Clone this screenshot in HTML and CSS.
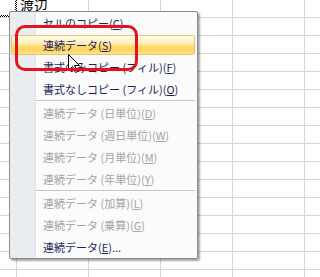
FILE: index.html
```html
<!DOCTYPE html>
<html lang="ja">
<head>
<meta charset="utf-8">
<link rel="stylesheet" href="styles.css">
</head>
<body>
<div class="screen">
  <div class="sheet">
    <div class="cell"></div><div class="cell name"><span>渡辺</span></div><div class="cell"></div><div class="cell"></div><div class="cell"></div><div class="cell"></div>
    <div class="cell"></div><div class="cell"></div><div class="cell"></div><div class="cell"></div><div class="cell"></div><div class="cell"></div>
    <div class="cell"></div><div class="cell"></div><div class="cell"></div><div class="cell"></div><div class="cell"></div><div class="cell"></div>
    <div class="cell"></div><div class="cell"></div><div class="cell"></div><div class="cell"></div><div class="cell"></div><div class="cell"></div>
    <div class="cell"></div><div class="cell"></div><div class="cell"></div><div class="cell"></div><div class="cell"></div><div class="cell"></div>
    <div class="cell"></div><div class="cell"></div><div class="cell"></div><div class="cell"></div><div class="cell"></div><div class="cell"></div>
    <div class="cell"></div><div class="cell"></div><div class="cell"></div><div class="cell"></div><div class="cell"></div><div class="cell"></div>
    <div class="cell"></div><div class="cell"></div><div class="cell"></div><div class="cell"></div><div class="cell"></div><div class="cell"></div>
    <div class="cell"></div><div class="cell"></div><div class="cell"></div><div class="cell"></div><div class="cell"></div><div class="cell"></div>
    <div class="cell"></div><div class="cell"></div><div class="cell"></div><div class="cell"></div><div class="cell"></div><div class="cell"></div>
    <div class="cell"></div><div class="cell"></div><div class="cell"></div><div class="cell"></div><div class="cell"></div><div class="cell"></div>
    <div class="cell"></div><div class="cell"></div><div class="cell"></div><div class="cell"></div><div class="cell"></div><div class="cell"></div>
    <div class="cell"></div><div class="cell"></div><div class="cell"></div><div class="cell"></div><div class="cell"></div><div class="cell"></div>
    <div class="cell"></div><div class="cell"></div><div class="cell"></div><div class="cell"></div><div class="cell"></div><div class="cell"></div>
    <div class="cell"></div><div class="cell"></div><div class="cell"></div><div class="cell"></div><div class="cell"></div><div class="cell"></div>
    <div class="cell"></div><div class="cell"></div><div class="cell"></div><div class="cell"></div><div class="cell"></div><div class="cell"></div>
  </div>
  <div class="copy-range"></div>

  <div class="menu">
    <div class="item">セルのコピー(<u>C</u>)</div>
    <div class="item hot">連続データ(<u>S</u>)</div>
    <div class="item">書式のみコピー (フィル)(<u>F</u>)</div>
    <div class="item">書式なしコピー (フィル)(<u>O</u>)</div>
    <div class="sep"></div>
    <div class="item off">連続データ (日単位)(<u>D</u>)</div>
    <div class="item off">連続データ (週日単位)(<u>W</u>)</div>
    <div class="item off">連続データ (月単位)(<u>M</u>)</div>
    <div class="item off">連続データ (年単位)(<u>Y</u>)</div>
    <div class="sep"></div>
    <div class="item off">連続データ (加算)(<u>L</u>)</div>
    <div class="item off">連続データ (乗算)(<u>G</u>)</div>
    <div class="item">連続データ(<u>E</u>)...</div>
  </div>

  <svg class="cursor" width="13" height="20" viewBox="0 0 13 20">
    <path d="M0.5 0.5 V16.5 L4.5 12.5 L7.5 18.5 L9.5 17.5 L6.5 11.5 H11.5 Z" fill="#fff" stroke="#000" stroke-width="1"/>
  </svg>

  <div class="mark"></div>
</div>
</body>
</html>
```
FILE: styles.css
```css
html, body {
  margin: 0;
  padding: 0;
  background: #fff;
}
.screen {
  position: relative;
  width: 100%;
  min-width: 214px;
  height: 100vh;
  min-height: 277px;
  overflow: hidden;
  font-family: "Noto Sans CJK JP", "Noto Sans", sans-serif;
}
.sheet {
  display: grid;
  grid-template-columns: 17px repeat(5, 72px);
  grid-auto-rows: 18px;
}
.cell {
  box-sizing: border-box;
  border-right: 1px solid #d6d6d6;
  border-bottom: 1px solid #d6d6d6;
  overflow: hidden;
}
.name {
  padding-left: 3px;
}
.name span {
  display: block;
  font-size: 14px;
  line-height: 14px;
  margin-top: -2px;
  color: #000;
}
.copy-range {
  position: absolute;
  left: 0;
  top: 0;
  width: 17px;
  height: 17px;
}
.copy-range::before,
.copy-range::after {
  content: "";
  position: absolute;
  background: repeating-conic-gradient(#000 0 25%, #fff 0 50%);
  background-size: 2px 2px;
}
.copy-range::before {
  right: 0;
  top: 0;
  width: 2px;
  height: 17px;
}
.copy-range::after {
  left: 0;
  bottom: 0;
  width: 17px;
  height: 2px;
}
.menu {
  position: absolute;
  left: 9px;
  top: 11px;
  width: 189px;
  box-sizing: border-box;
  border: 1px solid #8a8a8a;
  border-radius: 2px;
  background: linear-gradient(to right, #e9edef 0 25px, #dfe3e5 25px 26px, #fbfbfb 26px);
  box-shadow: 2px 2px 2px rgba(0, 0, 0, 0.35);
}
.item {
  box-sizing: border-box;
  height: 22px;
  padding-left: 33px;
  display: flex;
  align-items: center;
  font-size: 11px;
  white-space: nowrap;
  color: #1b1f5c;
}
.item u {
  text-underline-offset: 1px;
}
.item.off {
  color: #a4a4a4;
}
.item.hot {
  height: 20px;
  margin: 1px 2px 1px 1px;
  padding-left: 31px;
  border: 1px solid #e3c47a;
  border-radius: 2px;
  background: linear-gradient(to bottom, #fffbe6 0%, #fff0bf 40%, #ffdc73 55%, #ffd65c 80%, #ffe38f 100%);
}
.sep {
  box-sizing: border-box;
  height: 2px;
  margin: 0 2px 0 26px;
  border-top: 1px solid #c5c5c5;
  border-bottom: 1px solid #ffffff;
}
.cursor {
  position: absolute;
  left: 68px;
  top: 54px;
}
.mark {
  position: absolute;
  left: 15px;
  top: 25px;
  width: 123px;
  height: 46px;
  box-sizing: border-box;
  border: 3px solid #e5131c;
  border-radius: 10px;
}
```
